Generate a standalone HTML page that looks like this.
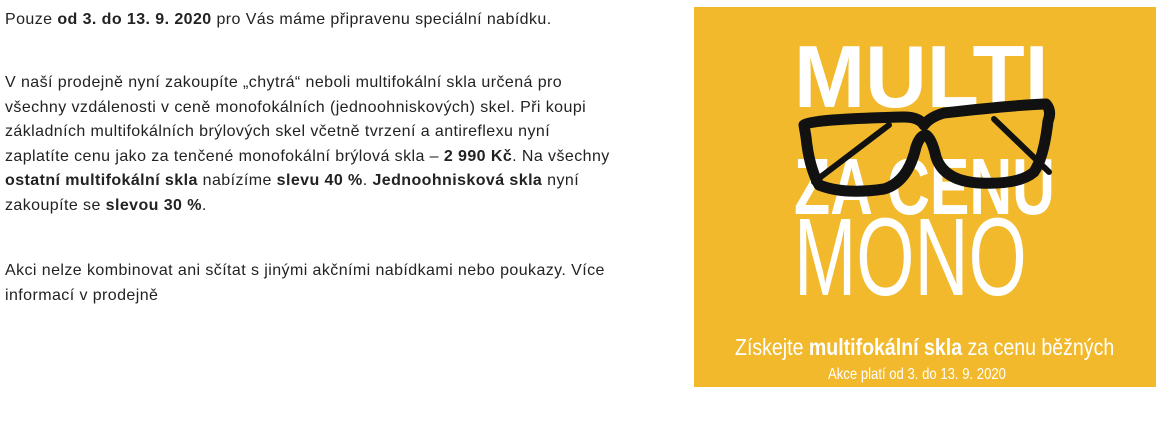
<!DOCTYPE html>
<html><head><meta charset="utf-8"><style>
body{margin:0;background:#fff;width:1162px;height:437px;overflow:hidden;position:relative;font-family:"Liberation Sans",sans-serif;color:#222}
.t{position:absolute;left:5px;width:680px;font-size:16px;line-height:24.6px;letter-spacing:0.42px}
.t p{margin:0}
.ad{position:absolute;left:694px;top:7px;width:462px;height:380px;background:#f1b92b;overflow:hidden}
.h{position:absolute;color:#fff;white-space:nowrap;transform-origin:0 0;line-height:1}
</style></head><body>
<div class="t" style="top:8px"><p>Pouze <b>od 3. do 13. 9. 2020</b> pro Vás máme připravenu speciální nabídku.</p></div>
<div class="t" style="top:71px"><p>V naší prodejně nyní zakoupíte „chytrá“ neboli multifokální skla určená pro<br>všechny vzdálenosti v ceně monofokálních (jednoohniskových) skel. Při koupi<br>základních multifokálních brýlových skel včetně tvrzení a antireflexu nyní<br>zaplatíte cenu jako za tenčené monofokální brýlová skla – <b>2 990 Kč</b>. Na všechny<br><b>ostatní multifokální skla</b> nabízíme <b>slevu 40 %</b>. <b>Jednoohnisková skla</b> nyní<br>zakoupíte se <b>slevou 30 %</b>.</p></div>
<div class="t" style="top:259px"><p>Akci nelze kombinovat ani sčítat s jinými akčními nabídkami nebo poukazy. Více<br>informací v prodejně</p></div>
<div class="ad">
<div class="h" style="left:100px;top:26px;font-size:88px;font-weight:bold;transform:scaleX(0.97)">MULTI</div>
<div class="h" style="left:100px;top:140px;font-size:80px;font-weight:bold;transform:scaleX(0.74)">ZA CENU</div>
<div class="h" style="left:100px;top:196px;font-size:110px;font-weight:300;transform:scaleX(0.68)">MONO</div>
<svg style="position:absolute;left:0;top:0" width="462" height="380">
<g fill="none" stroke="#111" stroke-linecap="round" stroke-linejoin="round">
<path d="M120 175 L195 118" stroke-width="6"/>
<path d="M300 112 L355 165" stroke-width="6"/>
<path d="M110 118 Q118 112 210 110 Q225 110 230 118 Q236 110 250 106 Q320 98 352 97 Q358 104 354 114 Q350 150 340 165 Q325 178 285 176 Q250 174 242 150 Q238 132 232 128 Q226 128 222 140 Q214 175 190 182 Q150 188 125 178 Q115 160 112 130 Z" stroke-width="11"/>
</g>
</svg>
<div class="h" style="left:41px;top:329px;font-size:23px;transform:scaleX(0.85)">Získejte <b>multifokální skla</b> za cenu běžných</div>
<div class="h" style="left:134px;top:360px;font-size:16px;transform:scaleX(0.82)">Akce platí od 3. do 13. 9. 2020</div>
</div>
</body></html>
